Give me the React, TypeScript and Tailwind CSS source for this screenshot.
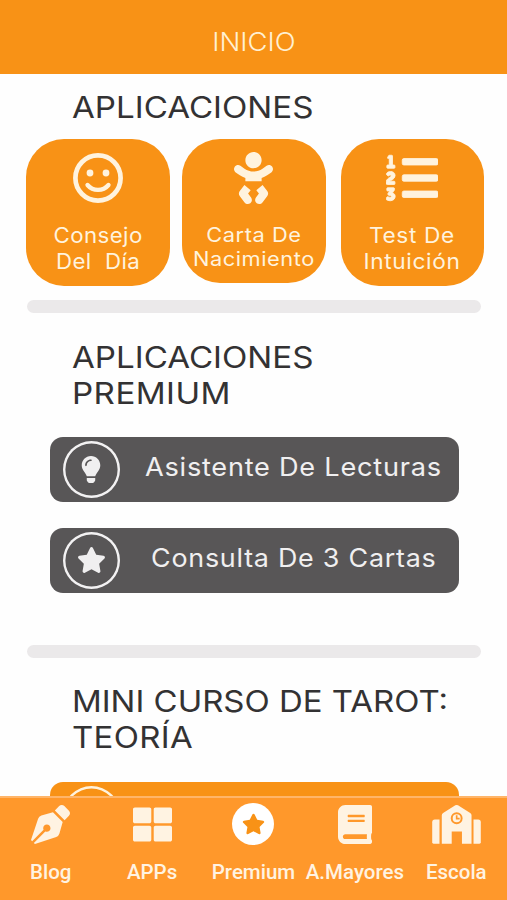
import React from 'react';
import { FaBaby, FaBook, FaLightbulb, FaListOl, FaPenNib, FaStar, FaThLarge } from 'react-icons/fa';

interface AppCardProps {
    icon: React.ReactNode;
    label: React.ReactNode;
    className: string;
}

interface PremiumButtonProps {
    icon: React.ReactNode;
    label: string;
    labelClass: string;
}

interface NavItemProps {
    icon: React.ReactNode;
    label: string;
}

const SmileIcon = () => (
    <svg className="w-[50px] h-[50px]" viewBox="0 0 50 50" fill="none" stroke="currentColor" strokeLinecap="round">
        <circle cx="25" cy="25" r="22.6" strokeWidth="4.7" />
        <circle cx="17" cy="20" r="3.4" fill="currentColor" stroke="none" />
        <circle cx="33" cy="20" r="3.4" fill="currentColor" stroke="none" />
        <path d="M14.5 32C20 38.6 30 38.6 35.5 32" strokeWidth="4.3" />
    </svg>
);

const SchoolIcon = () => (
    <svg className="w-[49px] h-[39px]" viewBox="0 0 147 118" fill="currentColor">
        <path d="M22 44v73H4q-4 0-4-4V52q0-8 8-8z" />
        <path d="M125 44v73h18q4 0 4-4V52q0-8-8-8z" />
        <path d="M70 1q4-2 8 0l37 23q4 3 4 7v86H90V80H59v37H29V31q0-4 4-7z" />
        <circle cx="74" cy="40" r="15" fill="none" stroke="#ff982b" strokeWidth="6" />
        <path d="M74 31v10h9" fill="none" stroke="#ff982b" strokeWidth="5" />
    </svg>
);

const AppCard: React.FC<AppCardProps> = ({ icon, label, className }) => (
    <button className={`flex flex-col items-center shrink-0 w-[143.5px] rounded-[38px] bg-[#f89216] text-[#fff3de] ${className}`}>
        <span className="flex items-center justify-center h-[50px] mt-[14px]">{icon}</span>
        {label}
    </button>
);

const PremiumButton: React.FC<PremiumButtonProps> = ({ icon, label, labelClass }) => (
    <button className="flex items-center w-[408.5px] h-[65px] pl-[12.5px] rounded-[13px] bg-[#585657] text-[#f0eff0]">
        <span className="flex items-center justify-center shrink-0 w-[57px] h-[57px] rounded-full ring-[2.4px] ring-inset ring-[#f3f2f3]">
            {icon}
        </span>
        <span className={`whitespace-nowrap origin-left text-[25.5px] leading-8 pb-1 ${labelClass}`}>{label}</span>
    </button>
);

const NavItem: React.FC<NavItemProps> = ({ icon, label }) => (
    <button className="flex flex-col items-center">
        <span className="flex items-center justify-center h-[42px] mt-[6px]">{icon}</span>
        <span className="mt-[14.5px] whitespace-nowrap font-['Roboto',sans-serif] font-medium text-[20.5px] leading-6">{label}</span>
    </button>
);

const Divider = () => <div className="w-[454px] h-[13px] ml-[27px] rounded-full bg-[#ebe9ea]" />;

export default function App() {
    return (
        <div className="flex flex-col h-screen w-full overflow-hidden bg-[#fefefe] font-['Inter',sans-serif]">
            {/* Header */}
            <header className="flex justify-center h-[73.5px] shrink-0 pt-[26.5px] bg-[#f89216] text-[#fff0d2]">
                <h1 className="text-[25px] leading-[30px] font-light scale-x-[1.1]">INICIO</h1>
            </header>

            <main className="flex-1 min-h-0 overflow-hidden text-[#333233]">
                <h2 className="mt-[15.5px] ml-[72px] text-[29.5px] leading-9 origin-left scale-x-[1.123] whitespace-nowrap">APLICACIONES</h2>

                <div className="flex items-start h-[147px] mt-[14px] pl-[26px]">
                    <AppCard
                        className="h-[146.5px]"
                        icon={<SmileIcon />}
                        label={
                            <span className="mt-[19.5px] text-[21px] leading-[26px] tracking-[0.4px] scale-x-[1.06] whitespace-pre">
                                Consejo<br />Del  Día
                            </span>
                        }
                    />
                    <AppCard
                        className="h-[144px] ml-[12.5px]"
                        icon={<FaBaby className="w-[45px] h-[52px]" />}
                        label={
                            <span className="mt-[19.5px] text-[20px] leading-[24.5px] tracking-[0.5px] scale-x-[1.09] whitespace-nowrap">
                                Carta De<br />Nacimiento
                            </span>
                        }
                    />
                    <AppCard
                        className="h-[146.5px] ml-[15px]"
                        icon={<FaListOl className="w-[52px] h-[52px] -mt-px stroke-current" strokeWidth={8} />}
                        label={
                            <span className="mt-[19.5px] text-[21px] leading-[26px] tracking-[0.6px] scale-x-[1.08] whitespace-nowrap">
                                Test De<br />Intuición
                            </span>
                        }
                    />
                </div>

                <div className="mt-[14px]">
                    <Divider />
                </div>

                {/* Premium apps */}
                <h2 className="mt-[26px] ml-[72px] text-[29.5px] leading-9 origin-left scale-x-[1.123] whitespace-nowrap">
                    APLICACIONES<br />
                    <span className="tracking-[0.4px]">PREMIUM</span>
                </h2>
                <div className="flex flex-col gap-[26px] mt-[25.5px] pl-[50px]">
                    <PremiumButton
                        icon={<FaLightbulb className="w-[20px] h-[27px]" />}
                        label="Asistente De Lecturas"
                        labelClass="ml-[25.5px] tracking-[0.7px] scale-x-[1.065]"
                    />
                    <PremiumButton
                        icon={<FaStar className="w-[29px] h-[28px]" />}
                        label="Consulta De 3 Cartas"
                        labelClass="ml-[31.5px] tracking-[0.7px] scale-x-[1.055]"
                    />
                </div>

                <div className="mt-[52px]">
                    <Divider />
                </div>

                {/* Mini course */}
                <h2 className="mt-[25px] ml-[72px] text-[29.5px] leading-9 origin-left scale-x-[1.117] whitespace-nowrap">
                    MINI CURSO DE TAROT:<br />
                    <span className="tracking-[0.3px]">TEORÍA</span>
                </h2>
                <div className="w-[408.5px] h-[65px] mt-[27px] ml-[50px] pl-[12.5px] pt-1 rounded-[13px] bg-[#f89216]">
                    <div className="w-[57px] h-[57px] rounded-full ring-[2.4px] ring-inset ring-[#fff3de]" />
                </div>
            </main>

            {/* Bottom navigation */}
            <nav className="grid grid-cols-5 h-[104.5px] shrink-0 border-t-2 border-[#ffb569] bg-[#ff982b] text-[#fff3e2]">
                <NavItem icon={<FaPenNib className="w-[39px] h-[39px]" />} label="Blog" />
                <NavItem icon={<FaThLarge className="w-[39px] h-[39px]" />} label="APPs" />
                <NavItem
                    icon={
                        <span className="flex items-center justify-center w-[42px] h-[42px] -mt-[2px] rounded-full bg-white">
                            <FaStar className="w-[23px] h-[22px] text-[#f89216]" />
                        </span>
                    }
                    label="Premium"
                />
                <NavItem icon={<FaBook className="w-[34px] h-[39px]" />} label="A.Mayores" />
                <NavItem icon={<SchoolIcon />} label="Escola" />
            </nav>
        </div>
    );
}
